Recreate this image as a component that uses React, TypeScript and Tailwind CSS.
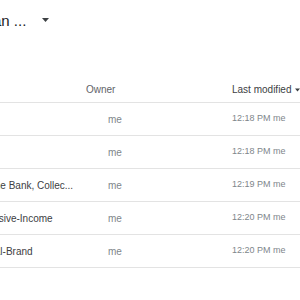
const files = [
  { name: "Notes", owner: "me", modified: "12:18 PM", by: "me" },
  { name: "Todo list", owner: "me", modified: "12:18 PM", by: "me" },
  { name: "Family Home Bank, Collec...", owner: "me", modified: "12:19 PM", by: "me" },
  { name: "Path to Passive-Income", owner: "me", modified: "12:20 PM", by: "me" },
  { name: "My Personal-Brand", owner: "me", modified: "12:20 PM", by: "me" },
];

const App = () => {
  return (
    <div className="w-[300px] h-[300px] overflow-hidden bg-white font-['Liberation_Sans',Arial,sans-serif]">
      {/* title */}
      <div className="flex items-center h-10 -ml-[7px] pt-[2px]">
        <span className="text-[15px] whitespace-nowrap text-[#202124]">an ...</span>
        <svg className="ml-[16px] shrink-0 -mt-[3px]" width="7" height="4" viewBox="0 0 7 4">
          <path d="M0 0h7L3.5 4z" fill="#3c4043" />
        </svg>
      </div>

      {/* table */}
      <div className="-ml-[53px] mt-9">
        <div className="grid grid-cols-[139px_146px_1fr] items-center h-[27px] border-b border-[#e3e3e3] text-[10px] whitespace-nowrap">
          <div />
          <div className="text-[#5f6368]">Owner</div>
          <div className="flex items-center gap-[4px] text-[#3c4043]">
            Last modified
            <svg className="shrink-0" width="5" height="5" viewBox="0 0 5 5">
              <path d="M0 1.5h5L2.5 4.5z" fill="#3c4043" />
            </svg>
          </div>
        </div>

        {files.map((f) => (
          <div
            key={f.name}
            className="grid grid-cols-[139px_146px_1fr] items-center h-[33px] border-b border-[#e3e3e3] whitespace-nowrap"
          >
            <div className="text-[10px] font-medium text-[#3c4043]">{f.name}</div>
            <div className="pl-[22px] text-[10px] text-[#80868b]">{f.owner}</div>
            <div className="text-[9px] text-[#80868b]">
              {f.modified} {f.by}
            </div>
          </div>
        ))}
      </div>
    </div>
  );
};

export default App;
